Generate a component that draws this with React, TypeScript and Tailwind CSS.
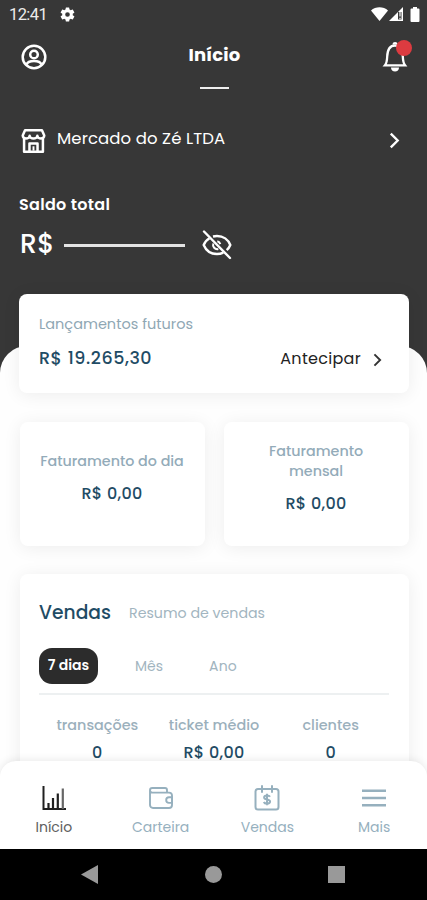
import type { ReactNode } from "react";
import clsx from "clsx";

type CardProps = {
  className?: string;
  children: ReactNode;
};

function Card({ className, children }: CardProps) {
  return <section className={clsx("rounded-[8px] bg-white shadow-[0_2px_18px_rgba(0,0,0,0.07)]", className)}>{children}</section>;
}

function Chevron({ className }: { className?: string }) {
  return (
    <svg viewBox="0 0 10 16" fill="none" stroke="currentColor" className={className}>
      <path d="M1.500 1.500 8 8l-6.500 6.500" strokeWidth="2.200" />
    </svg>
  );
}

function StatusBar() {
  return (
    <div className="flex h-7 items-center pl-[9px] pr-[7px]">
      <span className="mt-px font-['Roboto',sans-serif] text-[16.500px] leading-7 tracking-[-0.6px] text-[#ececec]">12:41</span>
      <svg viewBox="0 0 24 24" className="ml-[12px] h-[17px] w-[17px] fill-white">
        <path
          fillRule="evenodd"
          d="M19.4 13a7.500 7.500 0 0 0 0-2l2.100-1.600a.5.5 0 0 0 .1-.7l-2-3.400a.5.5 0 0 0-.6-.2l-2.500 1a7.300 7.300 0 0 0-1.700-1l-.4-2.600A.5.5 0 0 0 14 2h-4a.5.5 0 0 0-.4.500l-.4 2.600a7.500 7.500 0 0 0-1.700 1l-2.500-1a.5.5 0 0 0-.6.200l-2 3.400a.5.5 0 0 0 .1.700L4.600 11a8 8 0 0 0 0 2l-2.100 1.600a.5.5 0 0 0-.1.700l2 3.400c.1.200.4.300.6.200l2.500-1c.5.400 1.100.8 1.700 1l.4 2.600c0 .300.200.500.400.500h4c.200 0 .400-.200.400-.500l.4-2.600c.6-.2 1.200-.6 1.700-1l2.500 1c.2.100.5 0 .6-.200l2-3.400a.5.5 0 0 0-.1-.7ZM12 15.300a3.300 3.300 0 1 1 0-6.600 3.300 3.300 0 0 1 0 6.600Z"
        />
      </svg>
      <div className="ml-auto flex items-center">
        <svg viewBox="0 0 17 14" className="h-[14px] w-[17px] fill-white">
          <path d="M0 3.500C4.500-.7 12.500-.7 17 3.500L8.500 14Z" />
        </svg>
        <svg viewBox="0 0 15 14" className="ml-px h-[14px] w-[15px]">
          <path d="M0 14 14 0v14Z" fill="#fff" />
          <path d="M9 5h3.500v7.500H9z" fill="#373737" />
          <path d="M11 5v4.500M11 10.700v1.500" stroke="#fff" strokeWidth="1.200" />
        </svg>
        <svg viewBox="0 0 10 15" className="ml-[6px] h-[15px] w-[10px] fill-white">
          <path d="M3 0h4v1.500h1.500a1 1 0 0 1 1 1V14a1 1 0 0 1-1 1h-7a1 1 0 0 1-1-1V2.500a1 1 0 0 1 1-1H3Z" />
        </svg>
      </div>
    </div>
  );
}

function TopBar() {
  return (
    <div className="flex h-[62px] justify-between pl-[21px] pr-[15px] text-white">
      <svg viewBox="0 0 26 26" fill="none" stroke="currentColor" strokeWidth="2.500" className="mt-[16px] h-[26px] w-[26px]">
        <circle cx="13" cy="13" r="11.300" />
        <circle cx="13" cy="10.500" r="3.800" />
        <path d="M5.600 20.500c.8-2.500 3.600-3.500 7.400-3.500s6.600 1 7.400 3.500" />
      </svg>
      <div className="flex flex-col items-center">
        <h1 className="mt-[15px] text-[18px] font-bold leading-6 tracking-[0.2px]">Início</h1>
        <span className="mt-[20px] h-[2px] w-[29px] bg-[#eeeeee]" />
      </div>
      <div className="relative mt-[12px] h-[32px] w-[30px]">
        <svg viewBox="0 0 30 32" fill="none" stroke="currentColor" className="h-[32px] w-[30px]">
          <path d="M3 25.300c1.700-2 2-4.300 2.200-8.800C5.500 9.500 8 5.500 13 5.500s7.500 4 7.800 11c.2 4.500.6 6.800 2.200 8.800Z" strokeWidth="2.300" />
          <path d="M11.300 4.500a1.800 1.800 0 0 1 3.500 0" strokeWidth="2" />
          <path d="M9 27.500h8c0 2.500-1.700 4-4 4s-4-1.500-4-4Z" fill="currentColor" stroke="none" />
        </svg>
        <span className="absolute right-0 top-0 h-4 w-4 rounded-full bg-[#dc3b40]" />
      </div>
    </div>
  );
}

function StoreRow() {
  return (
    <div className="mt-[33px] flex h-[32px] items-center pl-[21px] pr-[27px] text-white">
      <svg viewBox="0 0 26 26" fill="none" stroke="currentColor" strokeWidth="2.600" strokeLinejoin="round" className="mt-[4px] h-[26px] w-[25px]">
        <path d="M4.200 1.700h17.600l2.400 5.600c0 2-1.500 3.200-3.400 3.200s-3.800-1.200-3.800-3c0 1.800-1.900 3-4 3s-4-1.200-4-3c0 1.800-1.900 3-3.800 3s-3.400-1.200-3.400-3.200Z" />
        <path d="M3.200 10.500v13.800h19.600V10.500M8.800 24v-8.500h8.400V24" />
        <path d="M13 18.500V23" strokeWidth="2" />
      </svg>
      <span className="ml-[11px] text-[16.500px] leading-6 tracking-[0.1px]">Mercado do Zé LTDA</span>
      <Chevron className="ml-auto mt-[3px] h-[17px] w-[11px]" />
    </div>
  );
}

function Balance() {
  return (
    <div className="mt-[38px] pl-[20px] text-white">
      <p className="-ml-px text-[16px] font-semibold leading-6 tracking-[0.3px]">Saldo total</p>
      <div className="mt-[12px] flex h-[32px] items-center">
        <span className="-mt-[3px] w-[44px] text-[26.500px] font-medium leading-8 tracking-[0.6px]">R$</span>
        <span className="h-[3px] w-[121px] bg-[#e3e3e3]" />
        <svg viewBox="0 0 30 30" fill="none" stroke="currentColor" strokeWidth="2.400" className="-mt-px ml-[17px] h-[30px] w-[30px]">
          <path d="M7.500 8.200C4.800 9.800 2.700 12.200 1.700 15c2.200 5.300 7.100 9 13.300 9 2.300 0 4.400-.5 6.300-1.400M11 6.500c1.300-.3 2.600-.5 4-.5 6.200 0 11.300 3.700 13.300 9-.8 2-2 3.700-3.600 5.100" />
          <path d="M11.300 13.500a4.200 4.200 0 0 0 5 5.500M15.300 11.300a4 4 0 0 1 3 2.800" strokeWidth="2" />
          <path d="m2 1.500 26 26.500" strokeLinecap="round" />
        </svg>
      </div>
    </div>
  );
}

function RevenueCard({ label, value }: { label: string; value: string }) {
  return (
    <Card className="flex h-[124px] flex-1 flex-col items-center justify-center pb-[11px] pr-px text-center">
      <p className="max-w-[150px] text-[14.300px] font-medium leading-5 text-[#93abb9]">{label}</p>
      <p className="mt-[11px] text-[16px] font-medium leading-6 tracking-[0.3px] text-[#1f4c65]">{value}</p>
    </Card>
  );
}

const stats = [
  { label: "transações", value: "0" },
  { label: "ticket médio", value: "R$ 0,00" },
  { label: "clientes", value: "0" },
];

function SalesCard() {
  return (
    <Card className="ml-[20px] mr-[18px] mt-[28px] h-[260px] pl-[19px] pr-[20px] pt-[25px]">
      <div className="flex items-center">
        <h2 className="w-[90px] text-[18.700px] font-medium leading-7 text-[#1f4c65]">Vendas</h2>
        <span className="text-[14.200px] leading-7 text-[#a2b5c0]">Resumo de vendas</span>
      </div>
      <div className="mt-[21px] flex h-[36px] items-center text-[14px] text-[#a2b5c0]">
        <span className="flex h-[36px] w-[59px] items-center justify-center rounded-[13px] bg-[#2c2c2c] pb-[2px] font-semibold text-white">
          7 dias
        </span>
        <span className="ml-[37px]">Mês</span>
        <span className="ml-[46px] tracking-[0.2px]">Ano</span>
      </div>
      <div className="mt-[9px] h-[2px] bg-[#edf0f1]" />
      <dl className="mt-[18px] grid grid-cols-3 text-center">
        {stats.map((stat) => (
          <div key={stat.label}>
            <dt className="whitespace-nowrap text-[14.400px] font-medium leading-6 text-[#9bb0bc]">{stat.label}</dt>
            <dd className="mt-[4px] text-[16px] font-medium leading-6 tracking-[0.3px] text-[#1f4c65]">{stat.value}</dd>
          </div>
        ))}
      </dl>
    </Card>
  );
}

function ChartIcon() {
  return (
    <svg viewBox="0 0 24 24" fill="none" stroke="#202020" className="h-6 w-6">
      <path d="M1.500 0v23H24" strokeWidth="2" />
      <path d="M6.500 23v-6M11 23V12M15.800 23V7.500" strokeWidth="2.200" />
      <path d="M20.800 23V2.500" strokeWidth="2.200" stroke="#666" />
    </svg>
  );
}

function WalletIcon() {
  return (
    <svg viewBox="0 0 24 24" fill="none" stroke="currentColor" strokeWidth="1.900" strokeLinejoin="round" className="h-6 w-6">
      <path d="M18 6.500V4a2 2 0 0 0-2-2H3.300a2.300 2.300 0 0 0 0 4.600H20a3 3 0 0 1 3 3V19a3 3 0 0 1-3 3H4a3 3 0 0 1-3-3V4.300" />
      <path d="M23 11.300h-3a2.800 2.800 0 0 0 0 5.600h3Z" />
    </svg>
  );
}

function CalendarIcon() {
  return (
    <svg viewBox="0 0 26 26" fill="none" stroke="currentColor" strokeWidth="2" className="h-[26px] w-[26px]">
      <rect x="1.500" y="4" width="23" height="20.500" rx="2.500" />
      <path d="M8 1v6M18 1v6" strokeLinecap="round" />
      <path d="M16 11.800c-.5-1-1.600-1.400-3-1.400-1.700 0-2.900.7-2.900 2 0 3 6 1.200 6 4.200 0 1.300-1.300 2.100-3.100 2.100-1.500 0-2.700-.5-3.200-1.700M13 8.700v11.600" />
    </svg>
  );
}

function MenuIcon() {
  return (
    <svg viewBox="0 0 24 24" fill="none" stroke="currentColor" strokeWidth="2.400" className="h-6 w-6">
      <path d="M0 4.700h24M0 12h24M0 19.300h24" />
    </svg>
  );
}

const tabs = [
  { label: "Início", icon: <ChartIcon />, active: true },
  { label: "Carteira", icon: <WalletIcon />, active: false },
  { label: "Vendas", icon: <CalendarIcon />, active: false },
  { label: "Mais", icon: <MenuIcon />, active: false },
];

function TabBar() {
  return (
    <nav className="relative -mt-[16px] grid h-[88px] shrink-0 grid-cols-4 rounded-t-[16px] bg-white pt-[24px] shadow-[0_-1px_9px_rgba(0,0,0,0.09)]">
      {tabs.map((tab) => (
        <div key={tab.label} className={clsx("flex flex-col items-center pl-px", tab.active ? "text-[#606060]" : "text-[#96b0be]")}>
          <span className="flex h-[26px] items-center">{tab.icon}</span>
          <span className="mt-[5px] text-[14px] leading-[22px]">{tab.label}</span>
        </div>
      ))}
    </nav>
  );
}

function SystemNav() {
  return (
    <div className="flex h-[51px] shrink-0 items-center justify-between bg-black pl-[81px] pr-[82px]">
      <svg viewBox="0 0 17 19" className="h-[19px] w-[17px] fill-[#999999]">
        <path d="M0 9.500 17 0v19Z" />
      </svg>
      <span className="h-[17px] w-[17px] rounded-full bg-[#999999]" />
      <span className="h-[17px] w-[17px] bg-[#999999]" />
    </div>
  );
}

export default function App() {
  return (
    <div className="flex h-[900px] w-[427px] flex-col overflow-hidden bg-[#373737] font-['Poppins','Inter',sans-serif] [font-feature-settings:'cv11']">
      <main className="h-[777px] shrink-0 overflow-hidden">
        <header className="h-[346px]">
          <StatusBar />
          <TopBar />
          <StoreRow />
          <Balance />
        </header>
        <div className="h-[500px] rounded-t-[27px] bg-[#fefefe]">
          <div className="-translate-y-[52px]">
            <Card className="ml-[19px] mr-[18px] flex h-[99px] flex-col px-[20px] pt-[19px]">
              <p className="text-[14.500px] leading-[22px] text-[#8fa7b4]">Lançamentos futuros</p>
              <div className="mt-[9px] flex items-center">
                <span className="text-[17.500px] font-medium leading-6 tracking-[0.55px] text-[#1f4c65]">R$ 19.265,30</span>
                <span className="ml-auto mt-[3px] text-[16px] leading-6 tracking-[0.3px] text-[#222222]">Antecipar</span>
                <Chevron className="ml-[12px] mr-[7px] mt-[4px] h-[14px] w-[9px] text-[#333333]" />
              </div>
            </Card>
            <div className="ml-[20px] mr-[18px] mt-[29px] flex gap-[19px]">
              <RevenueCard label="Faturamento do dia" value="R$ 0,00" />
              <RevenueCard label="Faturamento mensal" value="R$ 0,00" />
            </div>
            <SalesCard />
          </div>
        </div>
      </main>
      <TabBar />
      <SystemNav />
    </div>
  );
}
